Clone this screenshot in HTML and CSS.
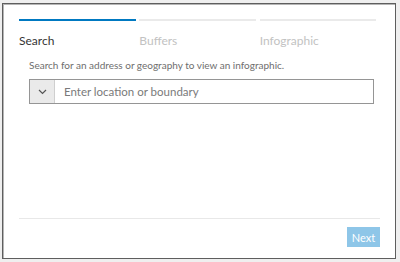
FILE: index.html
```html
<!DOCTYPE html>
<html lang="en">
<head>
  <meta charset="UTF-8" />
  <meta name="viewport" content="width=device-width, initial-scale=1.0" />
  <title>Infographic</title>
  <link rel="stylesheet" href="styles.css">
</head>
<body>
  <div class="panel">
    <!-- Step tabs -->
    <div class="steps">
      <div class="step active"><span>Search</span></div>
      <div class="step"><span>Buffers</span></div>
      <div class="step"><span>Infographic</span></div>
    </div>

    <div class="content">
      <p class="hint">Search for an address or geography to view an infographic.</p>
      <div class="search">
        <button class="drop">
          <svg width="9" height="6" viewBox="0 0 9 6"><path d="M1 1 L4.5 4.5 L8 1" fill="none" stroke="#555" stroke-width="1.2"/></svg>
        </button>
        <input type="text" placeholder="Enter location or boundary">
      </div>
    </div>

    <div class="footer">
      <button class="next" disabled>Next</button>
    </div>
  </div>
</body>
</html>
```

FILE: styles.css
```css
* {
  box-sizing: border-box;
}

body {
  margin: 0;
  padding: 3px 4px 3px 2px;
  background-color: #efefef;
  font-family: Lato, "Open Sans", sans-serif;
}

.panel {
  height: 256px;
  background-color: #fff;
  border: 1px solid #5e5e5e;
  box-shadow: inset 1px 1px 0 #b5b5b5;
  padding: 15px 15px 11px 16px;
  display: flex;
  flex-direction: column;
}

.steps {
  display: flex;
}

.step {
  width: 120.5px;
  padding-right: 3.5px;
}

.step span {
  display: block;
  border-top: 2px solid #eaeaea;
  padding-top: 12px;
  font-size: 12px;
  color: #c2c2c2;
  line-height: 16px;
}

.step.active span {
  border-top-color: #0079c1;
  color: #353535;
}

.content {
  flex: 1;
  padding-left: 10px;
}

.hint {
  margin: 9px 0 7px;
  font-size: 10px;
  line-height: 14px;
  color: #6e6e6e;
}

.search {
  display: flex;
  width: 345px;
  height: 25px;
  border: 1px solid #959595;
}

.drop {
  width: 25px;
  border: none;
  border-right: 1px solid #cfcfcf;
  background-color: #eaeaea;
  padding: 0;
  display: flex;
  align-items: center;
  justify-content: center;
}

.search input {
  flex: 1;
  border: none;
  outline: none;
  padding: 0 9px;
  font-family: Lato, "Open Sans", sans-serif;
  font-size: 11.5px;
  color: #333;
}

.search input::placeholder {
  color: #7a7a7a;
}

.footer {
  border-top: 1px solid #e8e8e8;
  padding-top: 8px;
  display: flex;
  justify-content: flex-end;
}

.next {
  width: 33px;
  height: 20px;
  border: none;
  background-color: #8ec6e8;
  color: #fff;
  font-family: Lato, "Open Sans", sans-serif;
  font-size: 11px;
  padding: 0;
}
```
